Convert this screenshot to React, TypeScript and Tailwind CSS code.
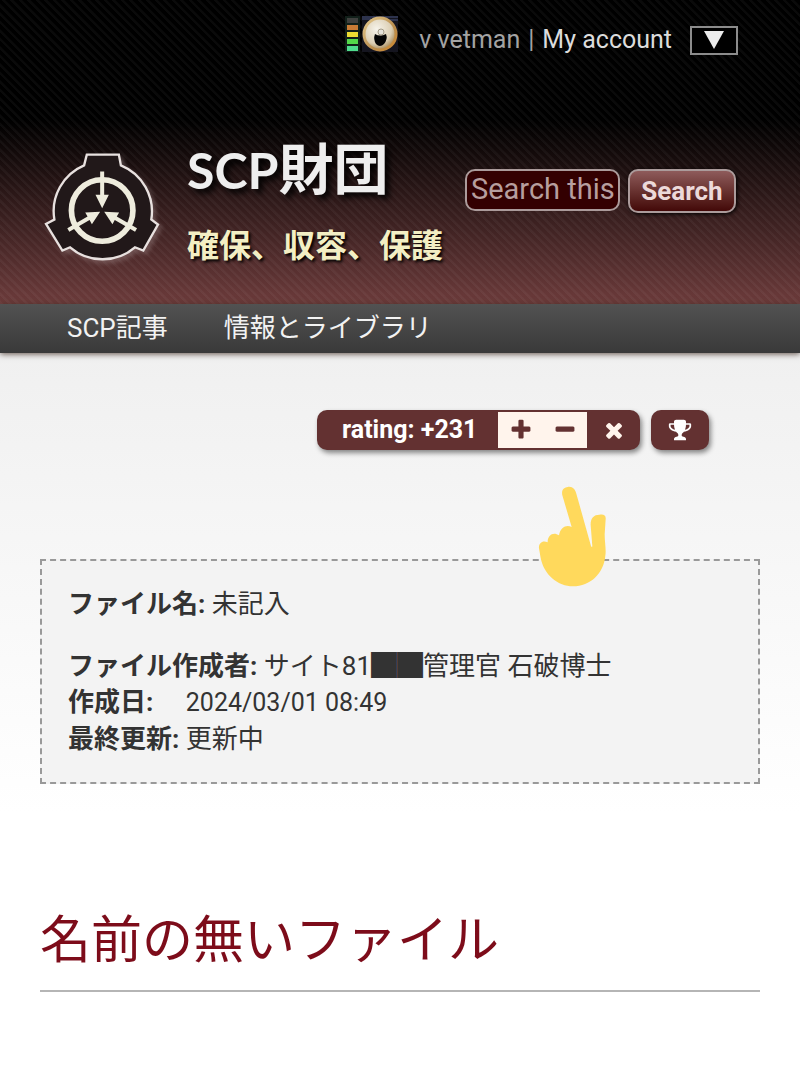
import React from "react";

const navItems = ["SCP記事", "情報とライブラリ"];

const fileInfo = [
  { label: "ファイル作成者:", value: "サイト81██管理官 石破博士" },
  { label: "作成日:", value: "2024/03/01 08:49", date: true },
  { label: "最終更新:", value: "更新中" },
];

const iconPaths = {
  plus: "M1600 736v192q0 40-28 68t-68 28h-416v416q0 40-28 68t-68 28h-192q-40 0-68-28t-28-68v-416h-416q-40 0-68-28t-28-68v-192q0-40 28-68t68-28h416v-416q0-40 28-68t68-28h192q40 0 68 28t28 68v416h416q40 0 68 28t28 68z",
  minus:
    "M1600 736v192q0 40-28 68t-68 28h-1216q-40 0-68-28t-28-68v-192q0-40 28-68t68-28h1216q40 0 68 28t28 68z",
  times:
    "M1490 1322q0 40-28 68l-136 136q-28 28-68 28t-68-28l-294-294-294 294q-28 28-68 28t-68-28l-136-136q-28-28-28-68t28-68l294-294-294-294q-28-28-28-68t28-68l136-136q28-28 68-28t68 28l294 294 294-294q28-28 68-28t68 28l136 136q28 28 28 68t-28 68l-294 294 294 294q28 28 28 68z",
  trophy:
    "M522 883q-74-162-74-371h-256v96q0 78 94.5 162t235.5 113zm1078-275v-96h-256q0 209-74 371 141-29 235.5-113t94.5-162zm128-128v128q0 71-41.5 143t-112 130-173 97.5-215.5 44.5q-42 54-95 95-38 34-52.5 72.5t-14.5 89.5q0 54 30.5 91t97.5 37q75 0 133.5 45.5t58.5 114.5v64q0 14-9 23t-23 9h-832q-14 0-23-9t-9-23v-64q0-69 58.5-114.5t133.5-45.5q67 0 97.5-37t30.5-91q0-51-14.5-89.5t-52.5-72.5q-53-41-95-95-113-5-215.5-44.5t-173-97.5-112-130-41.5-143v-128q0-40 28-68t68-28h288v-96q0-66 47-113t113-47h576q66 0 113 47t47 113v96h288q40 0 68 28t28 68z",
};

const Icon = ({ name }: { name: keyof typeof iconPaths }) => (
  <svg viewBox="0 0 1792 1792" className="size-6 fill-current" aria-hidden="true">
    <path d={iconPaths[name]} />
  </svg>
);

const Logo = () => (
  <svg
    viewBox="40 68 350 330"
    className="w-[117px] shrink-0 drop-shadow-[3px_3px_2px_rgba(170,150,150,0.35)]"
    aria-hidden="true"
  >
    <path
      d="M168 76H264L270 108A149 149 0 0 1 361 270L381 285L337 363L312 353A149 149 0 0 1 118 353L95 363L46 283L71 270A149 149 0 0 1 160 108Z"
      fill="#211819"
      stroke="#e8e1df"
      strokeWidth="7"
    />
    <circle cx="214" cy="243" r="92" fill="none" stroke="#eeecdd" strokeWidth="17" />
    {[0, 120, 240].map((angle) => (
      <g key={angle} transform={`rotate(${angle} 214 243)`} fill="#eeecdd">
        <path d="M208 126H220V196H234L214 236L194 196H208Z" />
      </g>
    ))}
  </svg>
);

const Avatar = () => (
  <svg viewBox="0 0 54 36" className="w-[54px] self-start" aria-hidden="true">
    <defs>
      <linearGradient id="gold" x1="0" y1="0" x2="1" y2="1">
        <stop offset="0" stopColor="#e4c98c" />
        <stop offset="0.6" stopColor="#b98d4e" />
        <stop offset="1" stopColor="#d08a30" />
      </linearGradient>
      <radialGradient id="face" cx="0.4" cy="0.35" r="0.65">
        <stop offset="0" stopColor="#f6f3ea" />
        <stop offset="0.7" stopColor="#dccfb4" />
        <stop offset="1" stopColor="#a98c5c" />
      </radialGradient>
    </defs>
    <rect width="15" height="36" fill="#12201a" />
    <rect x="2" y="2" width="11" height="5" fill="#3f403e" />
    <rect x="2" y="9" width="11" height="5" fill="#c87b35" />
    <rect x="2" y="16" width="11" height="5" fill="#ecdc32" />
    <rect x="2" y="23" width="11" height="5" fill="#53d84a" />
    <rect x="2" y="30" width="11" height="5" fill="#4fdc8d" />
    <rect x="17" width="36" height="36" fill="#15151f" />
    <path d="M17 1H53M17 3H26M45 4H53" stroke="#46537c" />
    <circle cx="35" cy="18" r="16" fill="url(#face)" stroke="url(#gold)" strokeWidth="3" />
    <path d="M30 18Q28 23 31 28Q35 32 39 28Q43 23 41 18Q35 21 30 18Z" fill="#050505" />
    <circle cx="36" cy="16" r="3" fill="#e6e3da" stroke="#a39b87" />
  </svg>
);

const PointingHand = () => (
  <svg
    viewBox="0 0 210 306"
    className="absolute -top-[75px] right-[150px] w-[70px]"
    fill="#ffd95c"
    aria-hidden="true"
  >
    <path d="M73 28C69 10 80 4 89 3C103 0 112 10 115 23L159 180Q162 186 163 181L158 118C157 97 167 86 184 86C197 84 204 87 203 99L200 145C200 169 205 190 202 209C197 262 157 301 105 301C60 301 18 267 8 216L3 187C1 172 14 161 29 169C28 148 46 136 63 148C68 122 86 116 101 123Z" />
  </svg>
);

const Header = () => (
  <header>
    <div className="bg-[repeating-linear-gradient(45deg,rgba(255,255,255,0.04)_0_2px,transparent_3px_6px),linear-gradient(to_bottom,#000_0,#000_120px,#6c3b3b_100%)] pt-4 pb-[38px]">
      <div className="flex h-12 items-center justify-end pr-[62px] text-[25px] text-[#dcdcdc]">
        <Avatar />
        <a href="#user" className="ml-5 text-[#a3a3a3]">
          v vetman
        </a>
        <span className="mx-2 text-[#a3a3a3]">|</span>
        <a href="#account">My account</a>
        <button
          type="button"
          aria-label="Account menu"
          className="ml-[18px] flex h-[29px] w-12 items-center justify-center border-2 border-[#8c8c8c] bg-black"
        >
          <svg viewBox="0 0 20 18" className="w-5 fill-[#ececec]" aria-hidden="true">
            <path d="M0 0H20L10 18Z" />
          </svg>
        </button>
      </div>

      <div className="mt-[72px] flex items-start justify-between pr-16 pl-11">
        <div className="flex items-start gap-[26px]">
          <div className="pt-4">
            <Logo />
          </div>
          <div className="flex flex-col gap-[22px] whitespace-nowrap">
            <h1 className="text-[55px] leading-[68px] font-bold text-[#eee] [text-shadow:4px_4px_6px_#000]">
              <a href="#top">
                <span className="font-['Lato',sans-serif] text-[50px]">SCP</span>財団
              </a>
            </h1>
            <p className="text-[32px] leading-10 font-bold text-[#f3efc4] [text-shadow:2px_2px_3px_#000]">
              確保、収容、保護
            </p>
          </div>
        </div>

        <form className="flex items-start gap-2 pt-[33px]" onSubmit={(e) => e.preventDefault()}>
          <input
            type="text"
            aria-label="Search this site"
            defaultValue="Search this"
            className="h-[42px] w-[155px] rounded-[10px] border-2 border-[#ab9b9b] bg-[#330001] px-1 text-[29px] text-[#b79e9e] outline-none"
          />
          <button
            type="submit"
            className="h-11 w-[108px] rounded-[10px] border-2 border-[#ab9b9b] bg-linear-to-b from-[#8e5b5b] to-[#430808] text-[26px] font-bold text-[#ecd9d9] shadow-[1px_1px_4px_#000]"
          >
            Search
          </button>
        </form>
      </div>
    </div>

    <nav className="relative flex h-[49px] items-center gap-14 bg-linear-to-b from-[#525252] to-[#393939] pl-[67px] text-[26px] text-[#f2f2f2] shadow-[0_1px_6px_rgba(60,40,30,0.8)]">
      {navItems.map((item) => (
        <a key={item} href="#nav">
          {item}
        </a>
      ))}
    </nav>
  </header>
);

const RatingBar = () => (
  <div className="flex justify-end gap-[11px] pr-[51px]">
    <div className="flex h-10 items-stretch overflow-hidden rounded-[10px] bg-[#633131] py-[2px] text-white shadow-[2px_3px_5px_rgba(0,0,0,0.45)]">
      <span className="flex w-[181px] items-center pl-[25px] text-[25px] font-bold">
        rating: +231
      </span>
      <button type="button" aria-label="Vote up" className="flex w-[45px] items-center justify-center bg-[#fff4ec] text-[#633131]">
        <Icon name="plus" />
      </button>
      <button type="button" aria-label="Vote down" className="flex w-11 items-center justify-center bg-[#fff4ec] text-[#633131]">
        <Icon name="minus" />
      </button>
      <button type="button" aria-label="Cancel vote" className="flex w-[53px] items-center justify-center text-[#fff4ec]">
        <Icon name="times" />
      </button>
    </div>
    <button
      type="button"
      aria-label="Awards"
      className="flex h-10 w-[58px] items-center justify-center rounded-[10px] bg-[#633131] text-white shadow-[2px_3px_5px_rgba(0,0,0,0.45)]"
    >
      <Icon name="trophy" />
    </button>
  </div>
);

export default function App() {
  return (
    <div className="min-h-screen bg-white font-['Roboto','Noto_Sans_CJK_JP',sans-serif]" lang="ja">
      <Header />
      <main className="bg-[linear-gradient(to_bottom,#f0f0f0_0,#fff_460px)] px-10 pt-[57px] pb-20">
        <RatingBar />

        <section className="relative mt-[109px] flex flex-col gap-[26px] border-2 border-dashed border-[#999] bg-[#f3f3f3] px-[26px] py-[25px] text-[26px] leading-9 text-[#333]">
          <p>
            <strong>ファイル名:</strong> 未記入
          </p>
          <div>
            {fileInfo.map((row) => (
              <p key={row.label}>
                <strong className={row.date ? "mr-[26px]" : undefined}>{row.label}</strong>{" "}
                <span className={row.date ? "text-[25px]" : undefined}>{row.value}</span>
              </p>
            ))}
          </div>
          <PointingHand />
        </section>

        <h2 className="mt-[119px] border-b-2 border-[#b5b5b5] pb-[11px] text-[51px] leading-[76px] text-[#7d0c1a]">
          名前の無いファイル
        </h2>
      </main>
    </div>
  );
}
